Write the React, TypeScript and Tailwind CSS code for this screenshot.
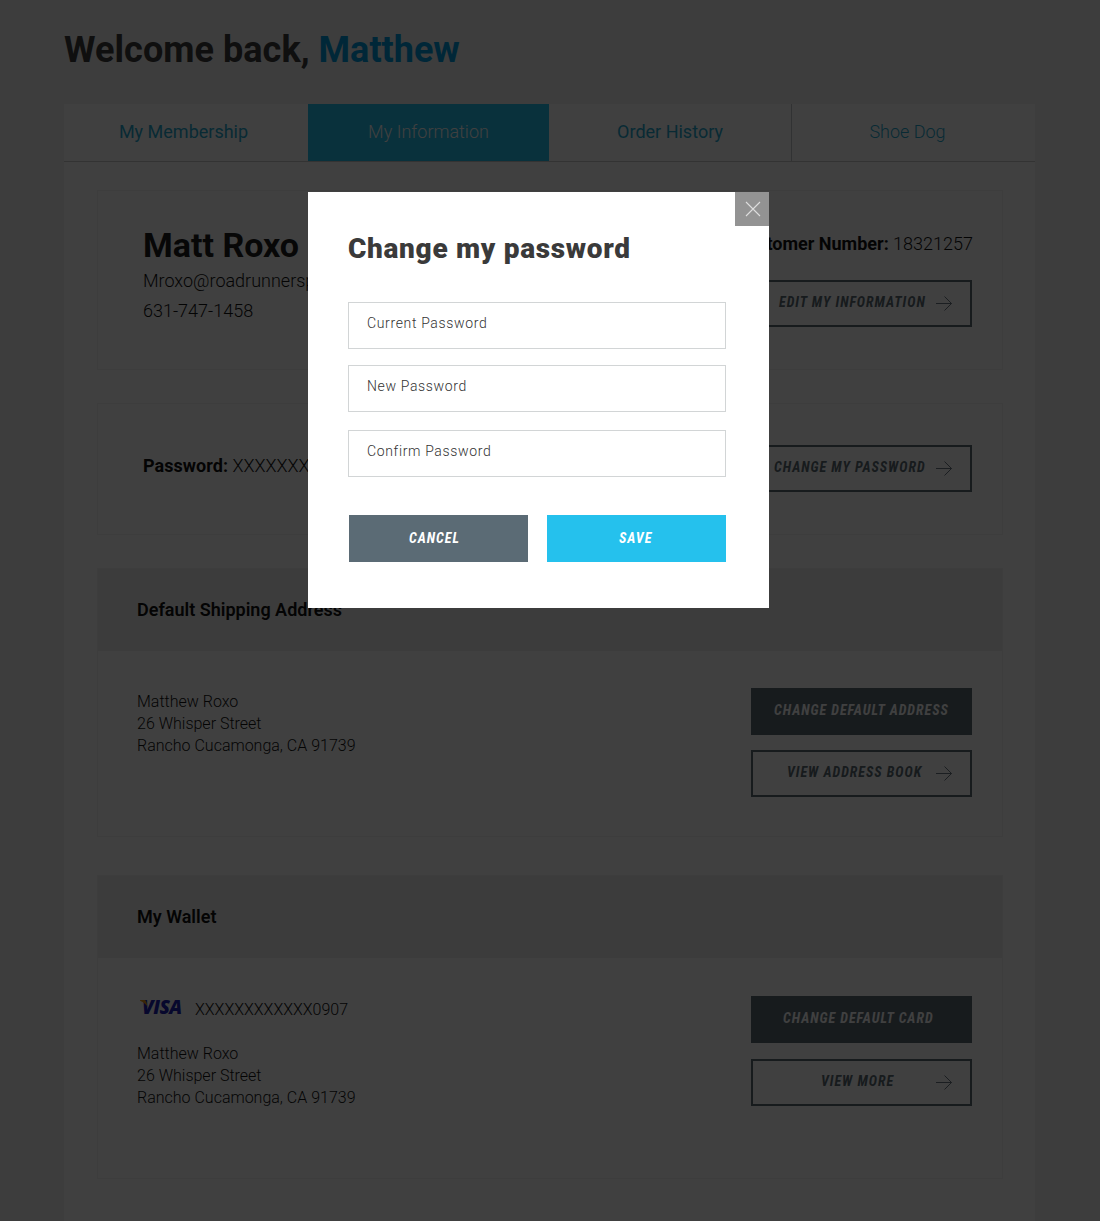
import type { ReactNode } from "react";

function Arrow() {
  return (
    <svg width="18" height="15" viewBox="0 0 18 15" fill="none" stroke="#5b6b75" strokeWidth="0.9" className="absolute right-[17px] top-[14px]">
      <path d="M1 7.500h15.500M9.500 0.500l7 7-7 7" />
    </svg>
  );
}

function Label({ children }: { children: ReactNode }) {
  return (
    <span className="inline-block whitespace-nowrap text-[14px] leading-[16px] font-bold italic tracking-[0.98px] [font-stretch:75%]">
      {children}
    </span>
  );
}

function OutlineButton({ children, pad }: { children: ReactNode; pad: string }) {
  return (
    <button className={`relative flex h-[47px] w-[221px] shrink-0 border-2 border-[#5b6b75] pt-[12px] text-[#5b6b75] ${pad}`}>
      <Label>{children}</Label>
      <Arrow />
    </button>
  );
}

function SolidButton({ children, pad }: { children: ReactNode; pad: string }) {
  return (
    <button className={`flex h-[47px] w-[221px] bg-[#5b6b75] pt-[14px] text-white ${pad}`}>
      <Label>{children}</Label>
    </button>
  );
}

function Tab({ children, cls }: { children: ReactNode; cls: string }) {
  return (
    <div className={`flex h-[57px] items-center justify-center pb-[2px] text-[18px] leading-[21px] ${cls}`}>
      {children}
    </div>
  );
}

function Address() {
  return (
    <div className="text-[16px] leading-[22px] font-light text-[#111]">
      <p>Matthew Roxo</p>
      <p>26 Whisper Street</p>
      <p>Rancho Cucamonga, CA 91739</p>
    </div>
  );
}

function Field({ label, cls }: { label: string; cls: string }) {
  return (
    <div className={`h-[47px] w-[378px] border border-[#d2d5d6] pt-[12px] pl-[18px] text-[14px] leading-[16px] font-[350] tracking-[0.65px] text-[#333] ${cls}`}>
      {label}
    </div>
  );
}

export default function App() {
  return (
    <div className="relative h-[1221px] w-[1100px] overflow-hidden bg-[#f2f2f2] [font-family:Roboto,sans-serif]">
      <h1 className="ml-[64px] pt-[29px] text-[36px] leading-[42px] font-bold text-[#3c3c3c]">
        <span className="tracking-[0.05px]">Welcome back, </span>
        <span className="text-[#009cde]">Matthew</span>
      </h1>

      <main className="mt-[33px] ml-[64px] h-[1120px] w-[971px] bg-white">
        <nav className="flex h-[58px] border-b border-[#ccc]">
          <Tab cls="w-[244px] pr-[5px] font-[380] text-[#24a9d0]">My Membership</Tab>
          <Tab cls="w-[241px] bg-[#24c1ee] font-light text-white">My Information</Tab>
          <Tab cls="w-[243px] border-r border-[#c4c8ca] font-[380] text-[#24a9d0]">Order History</Tab>
          <Tab cls="w-[243px] pr-[12px] font-light text-[#24a9d0]">Shoe Dog</Tab>
        </nav>

        <div className="ml-[33px] w-[906px]">
          <section className="mt-[28px] flex h-[180px] justify-between border border-[#f4f4f4] pr-[30px] pl-[45px]">
            <div className="pt-[33px] text-[18px] leading-[30px] font-light text-[#111]">
              <h2 className="text-[34px] leading-[42px] font-bold text-[#1c1c1c]">Matt Roxo</h2>
              <p>Mroxo@roadrunnersports.com</p>
              <p>631-747-1458</p>
            </div>
            <div className="flex flex-col items-end pt-[42px]">
              <p className="-mr-px mb-[26px] text-[18px] leading-[21px] font-light text-[#111]">
                <b className="font-bold">Customer Number:</b> 18321257
              </p>
              <OutlineButton pad="pl-[26px]">EDIT MY INFORMATION</OutlineButton>
            </div>
          </section>

          <section className="mt-[33px] flex h-[132px] justify-between border border-[#f4f4f4] pr-[30px] pl-[45px]">
            <p className="pt-[51px] text-[18px] leading-[21px] font-light text-[#111]">
              <b className="font-bold tracking-[0.05px]">Password:</b> XXXXXXXXXX
            </p>
            <div className="pt-[41px]">
              <OutlineButton pad="pl-[21px]">CHANGE MY PASSWORD</OutlineButton>
            </div>
          </section>

          <section className="mt-[33px] h-[269px] border border-[#f4f4f4]">
            <h3 className="h-[82px] bg-[#f0f0f0] pt-[31px] pl-[39px] text-[18px] leading-[20px] font-semibold text-[#111]">
              Default Shipping Address
            </h3>
            <div className="flex justify-between pr-[30px] pl-[39px]">
              <div className="pt-[40px]"><Address /></div>
              <div className="flex flex-col gap-[15px] pt-[37px]">
                <SolidButton pad="pl-[23px]">CHANGE DEFAULT ADDRESS</SolidButton>
                <OutlineButton pad="pl-[34px]">VIEW ADDRESS BOOK</OutlineButton>
              </div>
            </div>
          </section>

          <section className="mt-[38px] h-[304px] border border-[#f4f4f4]">
            <h3 className="h-[82px] bg-[#f0f0f0] pt-[31px] pl-[39px] text-[18px] leading-[20px] font-semibold text-[#111]">
              My Wallet
            </h3>
            <div className="flex justify-between pr-[30px] pl-[39px]">
              <div className="pt-[35px]">
                <div className="mb-[20px] flex h-[30px] items-center">
                  <span className="relative w-[58px] pb-[2px] pl-[5px] text-[19px] leading-[22px] text-[#1c22b4]">
                    <span className="inline-block [font-family:'Open_Sans',sans-serif] font-extrabold italic tracking-[-0.5px]">VISA</span>
                    <svg width="9" height="8" viewBox="0 0 9 8" className="absolute top-[4px] left-[3px]">
                      <path d="M0 0h5q1.500 .5 2.500 7Q5.500 3 0 .8Z" fill="#e8981c" />
                    </svg>
                  </span>
                  <span className="pt-[3px] text-[16px] leading-[22px] font-light text-[#111]">XXXXXXXXXXXX0907</span>
                </div>
                <Address />
              </div>
              <div className="flex flex-col gap-[16px] pt-[38px]">
                <SolidButton pad="pl-[32px]">CHANGE DEFAULT CARD</SolidButton>
                <OutlineButton pad="pl-[68px]">VIEW MORE</OutlineButton>
              </div>
            </div>
          </section>
        </div>
      </main>

      <div className="absolute inset-0 bg-black/75">
        <div className="relative mt-[192px] ml-[308px] h-[416px] w-[461px] bg-white pl-[40px]">
          <button aria-label="Close" className="absolute top-0 right-0 flex size-[34px] items-center justify-center bg-[#939393]">
            <svg width="16" height="16" viewBox="0 0 16 16" stroke="#dedede" strokeWidth="1.1" className="ml-[2px]">
              <path d="M1 1l14 14M15 1L1 15" />
            </svg>
          </button>
          <h2 className="pt-[40px] text-[28px] leading-[34px] font-black tracking-[0.69px] text-[#3a3a3a]">Change my password</h2>
          <Field label="Current Password" cls="mt-[36px]" />
          <Field label="New Password" cls="mt-[16px]" />
          <Field label="Confirm Password" cls="mt-[18px]" />
          <div className="mt-[38px] ml-px flex gap-[19px] text-white">
            <button className="flex h-[47px] w-[179px] bg-[#5b6b75] pt-[15px] pl-[60px]"><Label>CANCEL</Label></button>
            <button className="flex h-[47px] w-[179px] bg-[#25c1ed] pt-[15px] pl-[72px]"><Label>SAVE</Label></button>
          </div>
        </div>
      </div>
    </div>
  );
}
